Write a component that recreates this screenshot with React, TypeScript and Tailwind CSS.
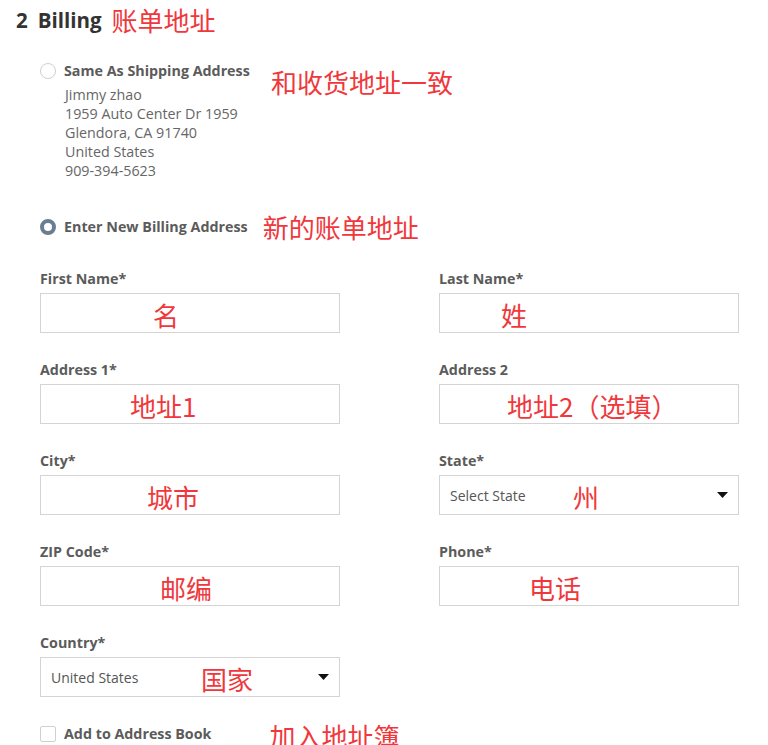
import React from "react";

const cn = "font-['Noto_Sans_CJK_SC',sans-serif] text-[#f0383c] text-[26px] leading-none whitespace-nowrap";

type FieldProps = {
  label: string;
  note?: string;
  noteLeft?: number;
  select?: string;
};

const Field: React.FC<FieldProps> = ({ label, note, noteLeft = 0, select }) => {
  return (
    <div className="w-[300px]">
      <p className="h-[18px] leading-[18px] text-[14.3px] font-bold text-[#5b5b5b]">{label}</p>
      <div className="relative mt-[5px] h-[40px] border border-[#d4d4d4] bg-white flex items-center">
        {select && (
          <>
            <span className="pl-[10px] text-[14px] text-[#555]">{select}</span>
            <svg className="ml-auto mr-[10px]" width="11" height="6" viewBox="0 0 11 6">
              <path d="M0 0h11L5.5 6z" fill="#111" />
            </svg>
          </>
        )}
        {note && (
          <span className={`${cn} absolute top-[8px]`} style={{ left: noteLeft }}>
            {note}
          </span>
        )}
      </div>
    </div>
  );
};

export default function App() {
  return (
    <div className="w-[768px] h-[745px] overflow-hidden bg-white font-['Open_Sans',sans-serif] relative">
      {/* heading */}
      <div className="mt-[6px] h-[28px] flex items-center pl-[16px]">
        <span className="text-[20.5px] font-bold text-[#333]">2</span>
        <span className="ml-[10px] text-[20.5px] font-bold text-[#333]">Billing</span>
        <span className={`${cn} ml-[10px]`}>账单地址</span>
      </div>

      {/* same as shipping */}
      <div className="relative pl-[40px] mt-[28px]">
        <div className="flex items-center h-[18px]">
          <span className="w-[16px] h-[16px] rounded-full border border-[#d0d0d0]" />
          <span className="ml-[8px] text-[14.3px] font-bold text-[#5b5b5b]">Same As Shipping Address</span>
        </div>
        <div className="ml-[25px] mt-[5px] text-[14.3px] leading-[19px] text-[#666]">
          <p>Jimmy zhao</p>
          <p>1959 Auto Center Dr 1959</p>
          <p>Glendora, CA 91740</p>
          <p>United States</p>
          <p>909-394-5623</p>
        </div>
        <span className={`${cn} absolute left-[271px] top-[7px]`}>和收货地址一致</span>
      </div>

      {/* new billing */}
      <div className="pl-[40px] mt-[38px] flex items-center h-[18px]">
        <span className="w-[16px] h-[16px] rounded-full border-[4px] border-[#6a7d91] bg-white" />
        <span className="ml-[8px] text-[14.3px] font-bold text-[#5b5b5b]">Enter New Billing Address</span>
        <span className={`${cn} ml-[15px]`}>新的账单地址</span>
      </div>

      {/* form */}
      <div className="pl-[40px] mt-[34px] grid grid-cols-[300px_300px] gap-x-[99px] gap-y-[28px]">
        <Field label="First Name*" note="名" noteLeft={112} />
        <Field label="Last Name*" note="姓" noteLeft={61} />
        <Field label="Address 1*" note="地址1" noteLeft={89} />
        <Field label="Address 2" note="地址2（选填）" noteLeft={67} />
        <Field label="City*" note="城市" noteLeft={106} />
        <Field label="State*" select="Select State" note="州" noteLeft={133} />
        <Field label="ZIP Code*" note="邮编" noteLeft={119} />
        <Field label="Phone*" note="电话" noteLeft={89} />
        <Field label="Country*" select="United States" note="国家" noteLeft={160} />
      </div>

      {/* add to address book */}
      <div className="pl-[40px] mt-[29px] flex items-center h-[16px]">
        <span className="w-[16px] h-[16px] rounded-[2px] border border-[#d0d0d0]" />
        <span className="ml-[8px] text-[14.3px] font-bold text-[#5b5b5b]">Add to Address Book</span>
        <span className={`${cn} ml-[58px] mt-[4px]`}>加入地址簿</span>
      </div>
    </div>
  );
}
